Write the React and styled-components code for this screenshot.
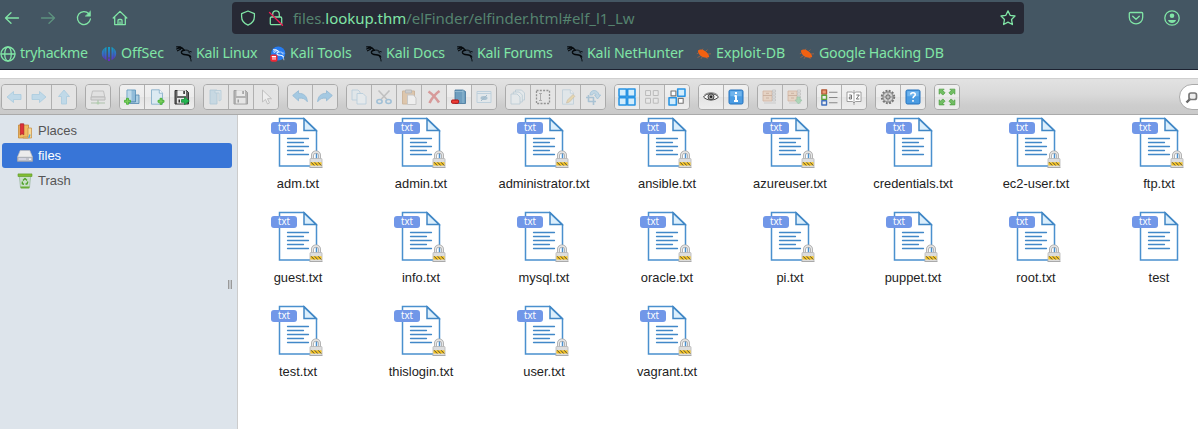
import React from 'react';
import styled, { createGlobalStyle } from 'styled-components';

const GlobalStyle = createGlobalStyle`
  * { box-sizing: border-box; }
  html, body { margin: 0; padding: 0; height: 100%; overflow: hidden; background: #fff; }
  svg { display: block; flex: none; }
`;

const Window = styled.div`
  width: 1198px;
  height: 429px;
  overflow: hidden;
  display: flex;
  flex-direction: column;
  background: #fff;
`;

/* ---------- browser chrome ---------- */

const Chrome = styled.header`
  height: 70px;
  flex: none;
  background: #445663;
  border-bottom: 1px solid #1c2130;
  color: #80e5a6;
  font-family: 'Noto Sans', sans-serif;
`;

const NavBar = styled.div`
  display: flex;
  align-items: center;
  height: 36px;
  padding: 0 18px 0 4px;
`;

const NavGroup = styled.div`
  display: flex;
  gap: 20px;
  width: 228px;
  flex: none;
`;

const AddressBar = styled.div`
  display: flex;
  align-items: center;
  width: 792px;
  height: 32px;
  padding: 0 8px;
  border-radius: 4px;
  background: #272935;
`;

const ShieldSlot = styled.div`
  margin-right: 12px;
`;

const Url = styled.div`
  flex: 1;
  margin-left: 9px;
  font-size: 15px;
  line-height: 20px;
  letter-spacing: ${(p) => p.$spacing}px;
  white-space: nowrap;
  color: #55836f;
  b { font-weight: 400; color: #80e5a6; }
`;

const NavActions = styled.div`
  display: flex;
  gap: 20px;
  margin-left: auto;
`;

const BookmarkBar = styled.nav`
  display: flex;
  height: 33px;
  padding-top: 2px;
`;

const Bookmark = styled.a`
  display: flex;
  align-items: center;
  gap: 4px;
  flex: none;
  width: ${(p) => p.$width}px;
  height: 32px;
  font-size: 14.2px;
  letter-spacing: ${(p) => p.$spacing || 0}px;
  white-space: nowrap;
`;

const BookmarkLabel = styled.span`
  line-height: 20px;
  padding-bottom: 2px;
`;

const Line = ({ children, size = 16, width = 1.3, ...rest }) => (
  <svg width={size} height={size} viewBox="0 0 16 16" fill="none" stroke="#80e5a6" strokeWidth={width} strokeLinecap="round" strokeLinejoin="round" {...rest}>
    {children}
  </svg>
);

const BackIcon = () => <Line><path d="M14.5 8H1.5M7 2.7 1.5 8 7 13.3" /></Line>;
const ForwardIcon = () => <Line opacity=".42"><path d="M1.5 8h13M9 2.7 14.5 8 9 13.3" /></Line>;
const ReloadIcon = () => (
  <Line><path d="M12.9 3.8A6.5 6.5 0 1 0 14.4 9" /><path d="M14.5 1.2v5h-5z" fill="#80e5a6" strokeWidth=".5" /></Line>
);
const HomeIcon = () => (
  <Line><path d="M1.2 8 8 1.4 14.8 8M2.7 7v7.6h10.6V7M6 14.5v-4a1 1 0 0 1 1-1h2a1 1 0 0 1 1 1v4M8 14v-2" /></Line>
);
const ShieldIcon = () => (
  <Line><path d="M8 1 14.4 3.6v3C14.4 10.7 11.8 13.7 8 15.2 4.2 13.7 1.6 10.7 1.6 6.6v-3z" /></Line>
);
const LockIcon = () => (
  <Line><path d="M4.7 7V4.2a3.3 3.3 0 0 1 6.6 0V7M3.5 7h9a1.2 1.2 0 0 1 1.2 1.2v5.3a1.2 1.2 0 0 1-1.2 1.2h-9a1.2 1.2 0 0 1-1.2-1.200V8.200A1.200 1.200 0 0 1 3.500 7z" /><path d="M1.500 2.500 14.500 15.200" stroke="#ed1d54" /></Line>
);
const StarIcon = () => (
  <Line><path d="m8 .9 2.150 4.400 4.850.7-3.500 3.450.9 5.050L8 12.200l-4.400 2.300.9-5.050L1 6l4.850-.7z" /></Line>
);
const PocketIcon = () => (
  <Line><path d="M2.300 2.500h11.400a1 1 0 0 1 1 1v3.700a6.700 6.700 0 0 1-13.400 0V3.500a1 1 0 0 1 1-1zM4.700 6.200 8 9.300l3.300-3.100" /></Line>
);
const AccountIcon = () => (
  <Line><circle cx="8" cy="8" r="7.200" /><circle cx="8" cy="5.800" r="2.300" fill="#80e5a6" stroke="none" /><path d="M4 10h8c-.5 2-2 3-4 3s-3.500-1-4-3z" fill="#80e5a6" stroke="none" /></Line>
);
const GlobeIcon = () => (
  <Line><circle cx="8" cy="8" r="7" /><ellipse cx="8" cy="8" rx="3.300" ry="7" /><path d="M1.200 8h13.600" /></Line>
);
const OffSecIcon = () => (
  <svg width="16" height="16" viewBox="0 0 16 16">
    <defs>
      <linearGradient id="offsec" x1="0" y1="0" x2="0" y2="1">
        <stop offset="0" stopColor="#10a5c4" /><stop offset=".6" stopColor="#3d5fc8" /><stop offset="1" stopColor="#6c25c8" />
      </linearGradient>
    </defs>
    <path fill="url(#offsec)" d="M7 1h2v10.500H7zM7 12.500h2V15H7zM5.500 1v13C2.600 13 .8 10.700.8 7.500S2.700 1.900 5.500 1zM10.500 1c2.800.9 4.700 3.300 4.700 6.500s-1.800 5.500-4.700 6.500z" />
    <path stroke="#445663" strokeWidth=".7" d="M3.200 1v13M12.800 1v13" opacity=".6" />
  </svg>
);
const Dragon = ({ color = '#05090c' }) => (
  <g fill="none" stroke={color} strokeLinecap="round" strokeLinejoin="round">
    <path strokeWidth="1.200" d="M.6.800 4.500.9 6.800 2.500M.6 3l2.700-1.100 3.500.6M1.500 4.800 4.500 3.300" />
    <path strokeWidth="1.400" d="M6 2.300 8.500 4.300C6.500 4.200 5.300 5.100 5.400 6.400c.2 1.500 2 2.200 4.500 2.400 2.500.2 4.200.8 4.800 2.200" />
    <path strokeWidth=".9" d="M8.500 4.200c2-.5 4 .1 5 1.200l1.800.4M12 5.500l2 1.700M12.500 9.500c1.600 1.500 2.500 3.500 2.600 5.500" />
  </g>
);
const KaliIcon = () => <svg width="16" height="16" viewBox="0 0 16 16"><Dragon /></svg>;
const KaliToolsIcon = () => (
  <svg width="16" height="16" viewBox="0 0 16 16">
    <circle cx="8.200" cy="7.500" r="7.100" fill="#267bf0" />
    <g transform="translate(3 3) scale(.72)"><Dragon color="#eaf4ff" /></g>
    <rect x=".3" y="8.500" width="7.200" height="7.300" rx="2" fill="#ed2936" />
    <path stroke="#fff" strokeWidth="1" d="M1.800 10.500h4.200M3 10.500v3.300M5 10.500v3.300" />
  </svg>
);
const BugIcon = () => (
  <svg width="16" height="16" viewBox="0 0 16 16">
    <path fill="#f26111" d="M2 4.600C3.500 3.200 6.500 3.200 9 5c2.400 1.500 4 3.700 4.200 6-2.300 1.400-5.900.7-8.300-1C2.900 8.500 1.800 6.500 2 4.600z" />
    <path fill="none" stroke="#c96a3c" strokeWidth=".6" d="M6 4 7 2.700M9.500 5.300l2-1.500M12 8l3-.2M10 11l1.500 2M6.500 10.500l-1.500 2.300M4.500 9.800 1.500 11.500M2.500 7 .8 7.800" />
  </svg>
);

const bookmarks = [
  { label: 'tryhackme', icon: GlobeIcon, width: 101, spacing: -0.33 },
  { label: 'OffSec', icon: OffSecIcon, width: 75, spacing: -0.08 },
  { label: 'Kali Linux', icon: KaliIcon, width: 94, spacing: -0.27 },
  { label: 'Kali Tools', icon: KaliToolsIcon, width: 96, spacing: -0.05 },
  { label: 'Kali Docs', icon: KaliIcon, width: 91, spacing: -0.15 },
  { label: 'Kali Forums', icon: KaliIcon, width: 110, spacing: -0.25 },
  { label: 'Kali NetHunter', icon: KaliIcon, width: 129, spacing: -0.16 },
  { label: 'Exploit-DB', icon: BugIcon, width: 103, spacing: 0 },
  { label: 'Google Hacking DB', icon: BugIcon, width: 150, spacing: -0.25 },
];

/* ---------- file manager toolbar ---------- */

const Toolbar = styled.div`
  display: flex;
  align-items: center;
  gap: 8px;
  flex: none;
  height: 37px;
  margin-top: 8px;
  padding: 1px 0 0 1px;
  border-top: 1px solid #cfcfcf;
  border-bottom: 1px solid #aaa;
  background: linear-gradient(#e2e2e2, #d9d9d9 45%, #cdcdcd 75%, #cacaca);
`;

const ButtonSet = styled.div`
  display: flex;
  flex: none;
  height: 26px;
  border: 1px solid #aaa;
  border-radius: 4px;
  overflow: hidden;
`;

const ToolButton = styled.button`
  display: flex;
  align-items: center;
  justify-content: center;
  width: ${(p) => (p.$first ? 24 : 25)}px;
  height: 24px;
  padding: 0;
  border: 0;
  border-left: ${(p) => (p.$first ? '0' : '1px solid #b0b0b0')};
  background: ${(p) => (p.$off ? '#e4e4e4' : 'linear-gradient(#f0f0f0, #ececec 49%, #e4e4e4 50%, #ededed)')};
  svg { opacity: ${(p) => (p.$off ? 0.38 : 1)}; }
`;

const SearchBox = styled.div`
  flex: none;
  display: flex;
  align-items: center;
  width: 200px;
  height: 26px;
  margin-left: 211px;
  padding-left: 4px;
  border: 1px solid #aaa;
  border-radius: 13px;
  background: #fff;
`;

const S = ({ children, w = 16, h = 16 }) => (
  <svg width={w} height={h} viewBox="0 0 16 16" strokeLinejoin="round">{children}</svg>
);

const arrow = 'M1 8 7.500 2.500V5.500H15v5H7.500v3z';
const Arrow = ({ turn = 0 }) => (
  <S><path transform={`rotate(${turn} 8 8)`} d={arrow} fill="#86c9ef" stroke="#4ba4d8" strokeWidth=".8" /></S>
);
const Plus = ({ x, y, color = '#3fae2c' }) => (
  <path transform={`translate(${x} ${y})`} d="M2 0h2v2h2v2H4v2H2V4H0V2h2z" fill="#7bcb5f" stroke={color} strokeWidth=".8" />
);
const Sheet = () => (
  <g stroke="#7daac6" strokeWidth=".8">
    <path d="M2.500.8h7.800l3.200 3.400v11h-11z" fill="#dceaf2" /><path d="M10.300.8v3.400h3.200" fill="#fff" />
  </g>
);
const Floppy = () => (
  <g>
    <path d="M1 1.500h11.500L14.500 3.500V15H1z" fill="#666" stroke="#333" />
    <path d="M3.500 1.200h8.500V7H3.500z" fill="#f1f1f1" /><path d="M3 9h9.500v5.500H3z" fill="#e8e8e8" /><path d="M4.500 10.500h1.500v3H4.500zM9.300 2h1.600v3H9.300z" fill="#333" />
  </g>
);
const Cells = ({ on }) => (
  <S w={on ? 18 : 16} h={on ? 18 : 16}>
    {[[0, 0], [7.7, 0], [0, 7.7], [7.7, 7.7]].map(([x, y]) => (
      <rect key={`${x}-${y}`} x={x + (on ? 0.9 : 1.6)} y={y + (on ? 0.9 : 1.6)} width={on ? 6.5 : 4.9} height={on ? 6.5 : 4.9} fill={on ? '#d3edfc' : '#eee'} stroke={on ? '#2994e3' : '#777'} strokeWidth={on ? 1.4 : 1} />
    ))}
  </S>
);
const Curve = ({ flip }) => (
  <S><path transform={flip ? 'translate(16 0) scale(-1 1)' : undefined} d="M.7 6.500 6.500 1.700v2.700c5.300-.2 8.500 2.600 8.800 8.300-2-3-4.700-4-8.800-3.500v2.600z" fill="#3f9fe0" stroke="#1779c0" strokeWidth=".9" /></S>
);
const Archive = ({ add }) => (
  <S>
    <path d="M1 2h9v10H1z" fill="#e7b893" stroke="#b66736" strokeWidth=".8" /><path d="M1 6.500h9M4 4.300h3M4 9h3" stroke="#985123" strokeWidth=".8" />
    <path d="M10.500 1h3v2h-3zM10.500 4h3v2h-3zM10.500 7h3v2h-3zM10.500 10h3v2h-3zM2 14h12" stroke="#777" fill="#ddd" strokeWidth=".6" />
    {add && <path d="M10 8h3v3h2l-3.500 4L8 11h2z" fill="#53bd70" stroke="#2c9450" strokeWidth=".7" />}
  </S>
);
const Blue = ({ children }) => (
  <S><rect x="1" y="1" width="14" height="14" rx="1.500" fill="#4b9ce2" stroke="#2773bd" /><path d="M2.300 2.300h11.400v5H2.300z" fill="#71b5ed" /><g fill="none" stroke="#fff" strokeWidth="2">{children}</g></S>
);

const icons = {
  back: <Arrow />,
  forward: <Arrow turn={180} />,
  up: <Arrow turn={90} />,
  mount: <S><path d="M2.500 2h11l1.300 6H1.200z" fill="#ddd" stroke="#888" /><path d="M1 8h14v3H1z" fill="#ccc" stroke="#777" /><path d="M8 11v3M1 14h14" stroke="#5a8f55" strokeWidth="1.100" /><circle cx="8" cy="14" r="1.500" fill="#69ad60" /></S>,
  mkdir: <S><path d="M3 1h8.500v12H3z" fill="#92bcd9" stroke="#6a9fc2" /><path d="M11.500 6H15v8.500H5V13h6.500z" fill="#accfe3" stroke="#5187ae" strokeWidth=".8" /><path d="M3.500 1.500h4v10h-4z" fill="#bdd9e9" /><Plus x={0.5} y={9.3} /></S>,
  mkfile: <S><Sheet /><Plus x={9} y={9.3} /></S>,
  saveAs: <S><Floppy /><path d="M7.500 10.500h3V8l4.800 4-4.800 3.700v-2.400h-3z" fill="#24b652" stroke="#118836" strokeWidth=".8" /></S>,
  open: <S><path d="M2 1h7v14H2z" fill="#99c6df" stroke="#5c9abf" strokeWidth=".8" /><path d="M7 4V1.500h6V11l-2 1V4z" fill="#c7e0ee" stroke="#6ba4c7" strokeWidth=".8" /></S>,
  download: <S><Floppy /></S>,
  pointer: <S><path d="M4.500 1v12l3-2.600 2 4.600 2-1-2-4.300h4z" fill="#fff" stroke="#888" /></S>,
  undo: <Curve />,
  redo: <Curve flip />,
  copy: <S><path d="M1 1h6l2 2v8H1z" fill="#dceaf2" stroke="#69a4cb" strokeWidth=".8" /><path d="M6 4.500h6l3 3V15H6z" fill="#e7f2f8" stroke="#69a4cb" strokeWidth=".8" /></S>,
  cut: <S><path d="M2.500 1.500 11.500 11M13.500 1.500 4.500 11" stroke="#888" strokeWidth="1.600" /><g fill="none" stroke="#3687c2" strokeWidth="1.600"><ellipse cx="3.500" cy="12.500" rx="2.600" ry="2" /><ellipse cx="12.500" cy="12.500" rx="2.600" ry="2" /></g></S>,
  paste: <S><path d="M1.500 2h12v13h-12z" fill="#d49852" stroke="#a96d2c" /><path d="M4.500 1h6v3h-6z" fill="#aaa" stroke="#777" /><path d="M6.500 6h6l2.500 3v6.500H6.500z" fill="#fff" stroke="#999" /></S>,
  remove: <S><path d="M2.500 2.500c4 2.500 7 6 10.500 11M13.500 2C9 5 6 9 3.500 14" fill="none" stroke="#c42323" strokeWidth="2.600" /></S>,
  empty: <S><path d="M4 1h8l2.500 1.500v12H4z" fill="#6e9ebf" stroke="#42759b" strokeWidth=".8" /><path d="M12 1v13M4 2.500h8" stroke="#9bc0d5" strokeWidth=".8" /><rect x=".6" y="11" width="7" height="3.300" rx=".8" fill="#ee3e37" stroke="#ae1515" /></S>,
  hide: <S><path d="M1 2.500h14v11H1z" fill="#e0edf5" stroke="#83b2d1" /><path d="M1 4.500h14" stroke="#83b2d1" /><ellipse cx="8" cy="9" rx="3.500" ry="2" fill="#4e8bb1" /><path d="M5 12l6-6" stroke="#3c7aa3" /></S>,
  duplicate: <S><g fill="#e5f0f5" stroke="#719fba" strokeWidth=".8"><path d="M5.500 1h6l3 3v7h-9z" /><path d="M3.300 3h6l3 3v7h-9z" /><path d="M1 5h6l3 3v7H1z" /></g></S>,
  rename: <S><path d="M1.500 1.500h13v13h-13z" fill="none" stroke="#111" strokeWidth="1.300" strokeDasharray="2 1.300" /><path d="M4 4.500h3M5.500 4.500v7M4 11.500h3" stroke="#555" /></S>,
  edit: <S><Sheet /><path d="m6.500 14 1-3L13 5.500l1.800 1.800L9.500 13z" fill="#e8c059" stroke="#ac8850" strokeWidth=".8" /></S>,
  resize: <S><path d="M3.500 6v6.500H11M1 8.500h7.500V16" fill="none" stroke="#4a8db9" strokeWidth="1.600" /><path d="M5 6C5 0 13 0 14 6h1.700L12.500 10 9.500 6H11C10.500 3.500 8 4 7.500 6z" fill="#8abfe2" stroke="#398bc1" strokeWidth=".8" /></S>,
  selectAll: <Cells on />,
  selectNone: <Cells />,
  invert: <S w={18} h={18}>{[[2.7, 2.7, 0], [8.6, 0.9, 1], [0.9, 8.6, 1], [9.2, 9.2, 0]].map(([x, y, on]) => <rect key={x} x={x} y={y} width={on ? 6.5 : 4.3} height={on ? 6.5 : 4.3} fill={on ? '#d3edfc' : '#fff'} stroke={on ? '#2994e3' : '#777'} strokeWidth={on ? 1.4 : 1} />)}</S>,
  preview: <S><path d="M.5 8C3.500 3.500 12 3.500 15.500 8 12 12 4 12 .5 8z" fill="#f8f8f8" stroke="#444" strokeWidth="1" /><path d="M1 6.500C4 2.700 12 2.700 15 6.500" fill="none" stroke="#777" strokeWidth=".8" /><circle cx="8" cy="7.800" r="3" fill="#aaa" stroke="#444" /><circle cx="8" cy="7.800" r="1.300" fill="#222" /></S>,
  info: <Blue><path d="M8 3v2M6.500 7H8v5M6 12h4" /></Blue>,
  extract: <Archive />,
  archive: <Archive add />,
  sort: <S w={17} h={17}><path d="M7.500 3h8M7.500 8h8M7.500 13h8" stroke="#888" /><g fill="#eee" strokeWidth="1.300"><path d="M.8.8h4.400v4H.8z" fill="#ed9b77" stroke="#b15736" /><path d="M.8 5.900h4.400v4H.8z" stroke="#5da13c" /><path d="M.8 11h4.400v4H.8z" stroke="#3f6fbd" /></g></S>,
  sortName: <S><path d="M1 3h5.500L8 4.500 9.500 3H15v9.500H9.500L8 14 6.500 12.500H1z" fill="#fff" stroke="#888" strokeWidth=".8" /><path d="M8 1v15" stroke="#888" strokeWidth=".7" /><path d="M3.200 6h2.300v4H3.300V8h2M10.300 6h3l-3 4h3" fill="none" stroke="#666" strokeWidth=".9" /></S>,
  settings: <S><circle cx="8" cy="8" r="6.200" fill="#ccc" stroke="#777" strokeWidth="2" strokeDasharray="1.900 1.346" /><circle cx="8" cy="8" r="5" fill="#d4d4d4" stroke="#888" /><circle cx="8" cy="8" r="2.200" fill="#bbb" stroke="#666" /><path d="M8 3v3M8 10v3M3 8h3M10 8h3" stroke="#999" /></S>,
  help: <Blue><path strokeWidth="1.600" d="M5.700 5.500C5.900 3 10.400 3.200 10.300 5.700c0 1.600-2.300 1.500-2.300 3.600M8 11v1.800" /></Blue>,
  fullscreen: <S w={18} h={18}>{[0, 90, 180, 270].map((a) => <path key={a} transform={`rotate(${a} 8 8)`} d="M1 1h4.500L4.300 2.300l2 2-2 2-2-2L1 5.500z" fill="#72bd64" stroke="#459b38" strokeWidth=".6" />)}</S>,
};

const toolGroups = [
  ['-back', '-forward', '-up'],
  ['-mount'],
  ['mkdir', 'mkfile', 'saveAs'],
  ['-open', '-download', '-pointer'],
  ['-undo', '-redo'],
  ['-copy', '-cut', '-paste', '-remove', 'empty', '-hide'],
  ['-duplicate', '-rename', '-edit', '-resize'],
  ['selectAll', '-selectNone', 'invert'],
  ['preview', 'info'],
  ['-extract', '-archive'],
  ['sort', 'sortName'],
  ['settings', 'help'],
  ['fullscreen'],
];

/* ---------- work zone ---------- */

const WorkZone = styled.main`
  display: flex;
  flex: 1;
  min-height: 0;
  font-family: 'Liberation Sans', Arial, sans-serif;
  font-size: 13px;
`;

const Sidebar = styled.aside`
  position: relative;
  flex: none;
  width: 238px;
  padding: 3px 5px 0 2px;
  background: #dde4eb;
  border-right: 1px solid #ccc;
`;

const TreeItem = styled.div`
  display: flex;
  align-items: center;
  gap: 5px;
  height: 25px;
  padding-left: 15px;
  border-radius: 3px;
  color: ${(p) => (p.$active ? '#fff' : '#555')};
  background: ${(p) => (p.$active ? '#3875d7' : 'transparent')};
`;

const SplitHandle = styled.div`
  position: absolute;
  right: 5px;
  top: 165px;
  width: 4px;
  height: 9px;
  border: solid #999;
  border-width: 0 1px;
  background: #c4c8cc;
`;

const PlacesIcon = () => (
  <S><path d="M1.500 2h10v13h-10z" fill="#efbd61" stroke="#bf8130" strokeWidth=".7" /><path d="M11 5h3.500v10H6v-1h5z" fill="#f8d995" stroke="#c58b3d" strokeWidth=".7" /><path d="M3.300.8h3.500v11L5 10.700 3.300 12z" fill="#df303a" stroke="#aa2026" strokeWidth=".7" /><path d="M13 11.500 11.800 15" stroke="#4ca7e3" strokeWidth="1.300" /></S>
);
const DriveIcon = () => (
  <S><path d="M3.200 2.500h9.600L15.500 9v4H.5V9z" fill="#ececec" stroke="#bbb" strokeWidth=".7" /><path d="M.5 9.300h15v4H.5z" fill="#c2c4cc" stroke="#989ca6" strokeWidth=".7" /><path d="M2 11h7" stroke="#eef" strokeWidth=".8" /><circle cx="13" cy="11.200" r=".9" fill="#fff" /></S>
);
const TrashIcon = () => (
  <S><path d="M2.300 3h11.400l-1.200 11.500h-9z" fill="#c9dfca" stroke="#8eae90" strokeWidth=".6" /><path d="M1 .9h14v2.600H1z" fill="#82bd32" stroke="#5d982a" strokeWidth=".6" /><path d="M3.300 13.500h9.400l-.5 1.900H3.800z" fill="#69ad36" /><path d="M6 7.500 8 5.500l2 2M10.800 8.500l-.8 2.500H8.500M7 11.200l-1.700-.4.100-2.300" fill="none" stroke="#4fa329" strokeWidth="1.400" /></S>
);

const FileGrid = styled.section`
  flex: none;
  display: grid;
  grid-template-columns: repeat(8, 123px);
  grid-auto-rows: 94px;
  align-content: start;
  margin-left: -1.500px;
`;

const FileCell = styled.div`
  display: flex;
  flex-direction: column;
  align-items: center;
  padding-top: 1px;
  color: #222;
  svg { margin-right: 1px; }
`;

const FileLabel = styled.span`
  margin-top: 4px;
  font-size: 12.9px;
  line-height: 15px;
  white-space: nowrap;
`;

const Badge = styled.text`
  font: 10px 'Noto Sans', sans-serif;
  fill: #fff;
`;

const FileIcon = ({ locked }) => (
  <svg width="54" height="56" viewBox="0 0 54 56">
    <path d="M8.500 2.500H33l12.500 12V50h-37z" fill="#fff" stroke="#4a90ce" strokeWidth="1.500" />
    <path d="M33 3v11.500h12z" fill="#dceffc" stroke="#4187c5" strokeWidth="1.500" />
    <path d="M16.500 22.500h21M16.500 26.500h16M16.500 30.500h21M16.500 34.500h16M16.500 38.500h21" stroke="#4188c8" strokeWidth="1.300" strokeLinecap="round" />
    <rect x="0" y="6" width="26" height="12" rx="3" fill="#7197e8" />
    <Badge x="13" y="15.200" textAnchor="middle" textLength="12" lengthAdjust="spacingAndGlyphs">txt</Badge>
    {locked && (
      <g transform="translate(38 35)">
        <path d="M3.500 8V4.500a3.500 3.500 0 0 1 7 0V8" fill="none" stroke="#aaa" strokeWidth="3" />
        <path d="M3.500 8V4.500a3.500 3.500 0 0 1 7 0V8" fill="none" stroke="#e8e8e8" strokeWidth="1.300" />
        <rect x="1" y="7.500" width="12" height="9" rx=".8" fill="#ddd" stroke="#b5b5b5" strokeWidth=".8" />
        <path d="M1.500 11.300h11v3.200h-11z" fill="#f8c41c" />
        <path d="m2.200 11.300 3 3.200M5.700 11.300l3 3.200M9.200 11.300l3 3.200" stroke="#57513f" strokeWidth="1" />
        <path d="M.5 16.500h13" stroke="#aaa" />
      </g>
    )}
  </svg>
);

const files = [
  'adm.txt', 'admin.txt', 'administrator.txt', 'ansible.txt', 'azureuser.txt', '*credentials.txt', 'ec2-user.txt', 'ftp.txt',
  'guest.txt', 'info.txt', 'mysql.txt', 'oracle.txt', 'pi.txt', 'puppet.txt', 'root.txt', '*test',
  'test.txt', 'thislogin.txt', 'user.txt', 'vagrant.txt',
];

export default function App() {
  return (
    <Window>
      <GlobalStyle />
      <Chrome>
        <NavBar>
          <NavGroup><BackIcon /><ForwardIcon /><ReloadIcon /><HomeIcon /></NavGroup>
          <AddressBar>
            <ShieldSlot><ShieldIcon /></ShieldSlot>
            <LockIcon />
            <Url $spacing={-0.04}>files.<b>lookup.thm</b>/elFinder/elfinder.html#elf_l1_Lw</Url>
            <StarIcon />
          </AddressBar>
          <NavActions><PocketIcon /><AccountIcon /></NavActions>
        </NavBar>
        <BookmarkBar>
          {bookmarks.map(({ label, icon: Icon, width, spacing }) => (
            <Bookmark key={label} $width={width} $spacing={spacing}><Icon /><BookmarkLabel>{label}</BookmarkLabel></Bookmark>
          ))}
        </BookmarkBar>
      </Chrome>
      <Toolbar>
        {toolGroups.map((group) => (
          <ButtonSet key={group[0]}>
            {group.map((entry, i) => (
              <ToolButton key={entry} $first={i === 0} $off={entry[0] === '-'}>{icons[entry.replace('-', '')]}</ToolButton>
            ))}
          </ButtonSet>
        ))}
        <SearchBox>
          <S><path d="M6 10 2.500 13.500" stroke="#666" strokeWidth="2.400" /><rect x="5" y="4" width="7.500" height="6.500" rx="2" fill="#eee" stroke="#777" strokeWidth="1.700" /></S>
        </SearchBox>
      </Toolbar>
      <WorkZone>
        <Sidebar>
          <TreeItem><PlacesIcon />Places</TreeItem>
          <TreeItem $active><DriveIcon />files</TreeItem>
          <TreeItem><TrashIcon />Trash</TreeItem>
          <SplitHandle />
        </Sidebar>
        <FileGrid>
          {files.map((name) => (
            <FileCell key={name}>
              <FileIcon locked={name[0] !== '*'} />
              <FileLabel>{name.replace('*', '')}</FileLabel>
            </FileCell>
          ))}
        </FileGrid>
      </WorkZone>
    </Window>
  );
}
